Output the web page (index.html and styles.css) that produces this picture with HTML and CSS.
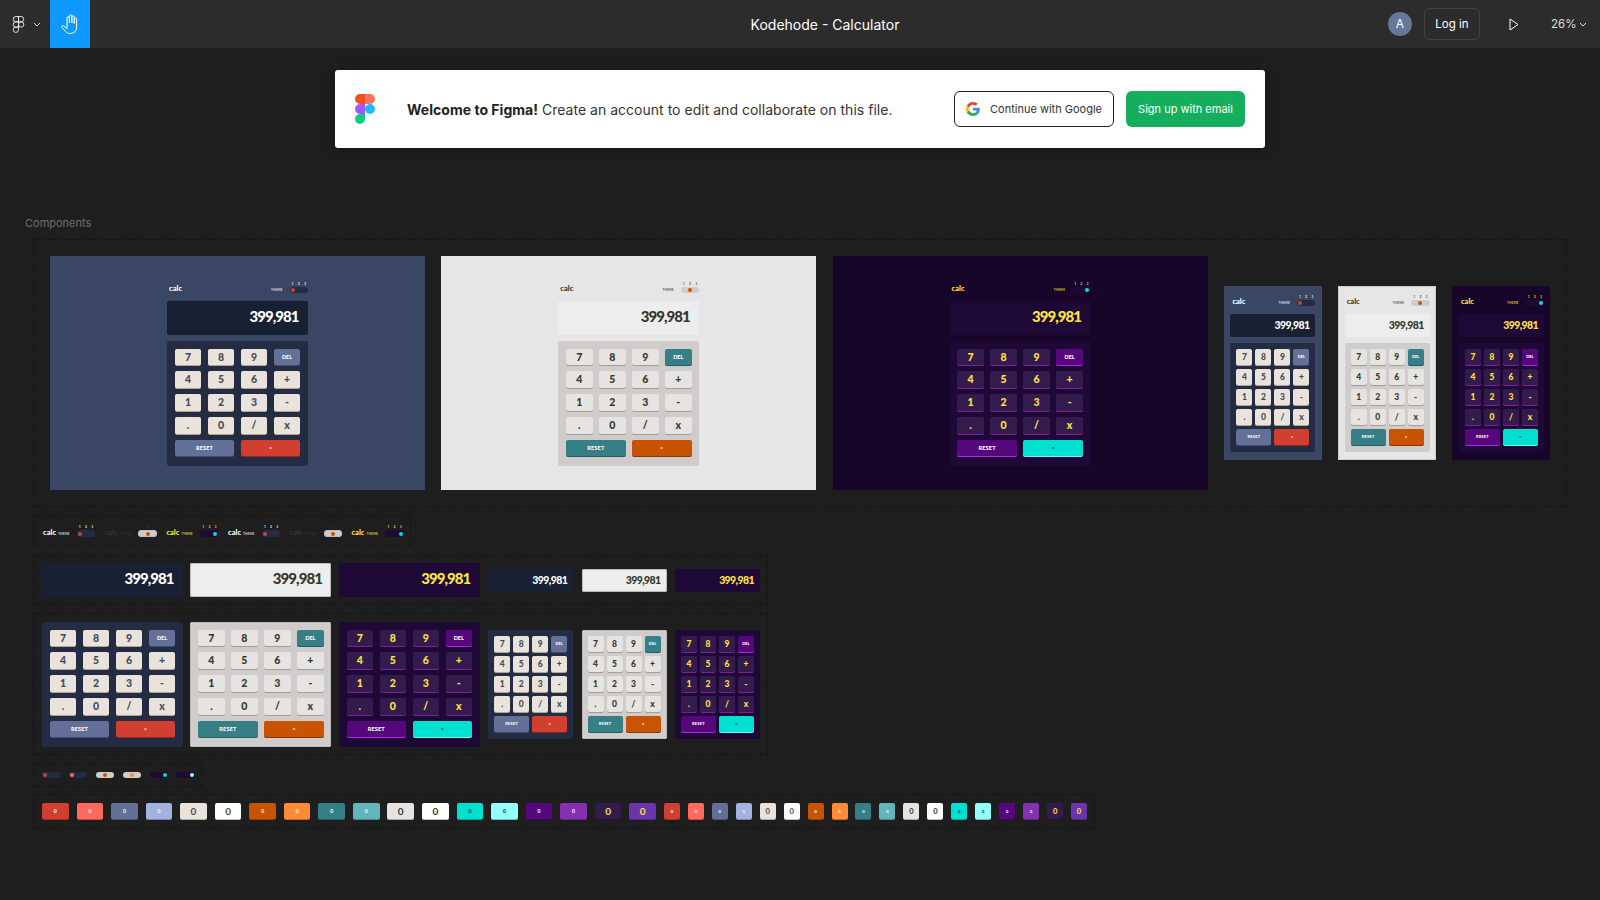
FILE: index.html
```html
<!DOCTYPE html>
<html lang="en">
<head>
  <meta charset="UTF-8">
  <meta name="viewport" content="width=device-width, initial-scale=1.0">
  <title>Kodehode - Calculator</title>
  <link rel="stylesheet" href="styles.css">
</head>
<body>
  <header class="topbar">
    <div class="menu">
      <svg class="figma-outline" viewBox="-2 -2 42 61">
        <path d="M19 28.5a9.5 9.5 0 1 1 19 0a9.5 9.5 0 1 1-19 0z"/>
        <path d="M0 47.5A9.5 9.5 0 0 1 9.5 38H19v9.5a9.5 9.5 0 1 1-19 0z"/>
        <path d="M19 0v19h9.5a9.5 9.5 0 1 0 0-19H19z"/>
        <path d="M0 9.5A9.5 9.5 0 0 0 9.5 19H19V0H9.5A9.5 9.5 0 0 0 0 9.5z"/>
        <path d="M0 28.5A9.5 9.5 0 0 0 9.5 38H19V19H9.5A9.5 9.5 0 0 0 0 28.5z"/>
      </svg>
      <svg class="chevron" viewBox="0 0 8 5"><path d="M1 1l3 3 3-3"/></svg>
    </div>
    <div class="hand">
      <svg viewBox="0 0 18 20">
        <path d="M6 11V4a1.2 1.2 0 0 1 2.4 0v5M8.4 9V2a1.2 1.2 0 0 1 2.4 0v7M10.8 9V3a1.2 1.2 0 0 1 2.4 0v6.5M13.200 9.500V5a1.2 1.2 0 0 1 2.400 0v8.500a6 6 0 0 1-6 6H9c-2 0-3.200-.8-4.400-2L1 13.500c-.8-1 .5-2.300 1.600-1.600L6 14.500V11"/>
      </svg>
    </div>
    <div class="title">Kodehode - Calculator</div>
    <div class="actions">
      <div class="avatar">A</div>
      <button class="login">Log in</button>
      <svg class="play" viewBox="0 0 10 13"><path d="M1 1l8 5.500-8 5.500z"/></svg>
      <div class="zoom-level">26%</div>
      <svg class="chevron" viewBox="0 0 8 5"><path d="M1 1l3 3 3-3"/></svg>
    </div>
  </header>

  <main class="canvas">
    <div class="banner">
      <svg class="figma-logo" viewBox="0 0 38 57">
        <path fill="#1abcfe" d="M19 28.5a9.5 9.5 0 1 1 19 0a9.5 9.5 0 1 1-19 0z"/>
        <path fill="#0acf83" d="M0 47.5A9.5 9.5 0 0 1 9.5 38H19v9.5a9.5 9.5 0 1 1-19 0z"/>
        <path fill="#ff7262" d="M19 0v19h9.5a9.5 9.5 0 1 0 0-19H19z"/>
        <path fill="#f24e1e" d="M0 9.5A9.5 9.5 0 0 0 9.5 19H19V0H9.5A9.5 9.5 0 0 0 0 9.5z"/>
        <path fill="#a259ff" d="M0 28.5A9.5 9.5 0 0 0 9.5 38H19V19H9.5A9.5 9.5 0 0 0 0 28.5z"/>
      </svg>
      <p class="welcome"><strong>Welcome to Figma!</strong> Create an account to edit and collaborate on this file.</p>
      <button class="btn-google">
        <svg viewBox="0 0 48 48">
          <path fill="#ea4335" d="M24 9.500c3.540 0 6.710 1.220 9.210 3.600l6.850-6.850C35.900 2.380 30.470 0 24 0 14.620 0 6.510 5.380 2.560 13.220l7.980 6.190C12.430 13.720 17.740 9.500 24 9.500z"/>
          <path fill="#4285f4" d="M46.980 24.550c0-1.570-.15-3.090-.38-4.550H24v9.020h12.940c-.58 2.960-2.260 5.480-4.780 7.180l7.730 6c4.510-4.180 7.090-10.360 7.090-17.650z"/>
          <path fill="#fbbc05" d="M10.530 28.590c-.48-1.450-.76-2.990-.76-4.590s.27-3.140.76-4.590l-7.980-6.190C.92 16.460 0 20.120 0 24c0 3.880.92 7.540 2.560 10.780l7.970-6.190z"/>
          <path fill="#34a853" d="M24 48c6.480 0 11.930-2.130 15.890-5.810l-7.730-6c-2.150 1.450-4.920 2.300-8.160 2.300-6.260 0-11.570-4.220-13.470-9.910l-7.980 6.190C6.510 42.620 14.620 48 24 48z"/>
        </svg>
        Continue with Google
      </button>
      <button class="btn-signup">Sign up with email</button>
    </div>

    <div class="page-label">Components</div>
    <section class="group group-main" id="mainGroup"></section>
    <section class="group group-headers" id="headerGroup"></section>
    <section class="group group-screens" id="screenGroup"></section>
    <section class="group group-keypads" id="keypadGroup"></section>
    <section class="group group-toggles" id="toggleGroup"></section>
    <section class="group group-swatches" id="swatchGroup"></section>
  </main>

  <script src="script.js"></script>
</body>
</html>
```

FILE: styles.css
```css
/* page */
* {
  box-sizing: border-box;
}
body {
  margin: 0;
  height: 900px;
  overflow: hidden;
  background-color: #1e1e1e;
  font-family: Inter, "Liberation Sans", sans-serif;
}

/* top bar */
.topbar {
  display: flex;
  align-items: center;
  height: 48px;
  background-color: #2c2c2c;
  color: #fff;
}
.menu {
  display: flex;
  align-items: center;
  gap: 8px;
  width: 50px;
  padding-left: 12px;
}
.figma-outline {
  width: 13px;
  height: 17px;
  fill: none;
  stroke: #fff;
  stroke-width: 3;
}
.chevron {
  width: 8px;
  height: 5px;
  fill: none;
  stroke: #ddd;
  stroke-width: 1;
}
.hand {
  display: flex;
  align-items: center;
  justify-content: center;
  width: 40px;
  height: 48px;
  background-color: #0d99ff;
}
.hand svg {
  width: 18px;
  height: 20px;
  fill: none;
  stroke: #fff;
  stroke-width: 1;
  overflow: visible;
}
.title {
  flex: 1;
  margin-right: -172px;
  text-align: center;
  font-size: 14px;
}
.actions {
  display: flex;
  align-items: center;
  width: 212px;
  font-size: 11.5px;
}
.avatar {
  width: 24px;
  height: 24px;
  margin-right: 12px;
  border-radius: 50%;
  background-color: #667799;
  text-align: center;
  font-size: 12px;
  line-height: 24px;
}
.login {
  width: 56px;
  height: 32px;
  margin-right: 29px;
  border: 1px solid #444;
  border-radius: 6px;
  background: none;
  color: #fff;
  font: 400 11.5px Inter, sans-serif;
}
.play {
  width: 10px;
  height: 13px;
  margin-right: 32px;
  fill: none;
  stroke: #fff;
  stroke-width: 1;
}
.zoom-level {
  width: 28px;
  color: #ddd;
}

/* canvas */
.canvas {
  position: relative;
  height: 852px;
  padding-top: 22px;
}
.banner {
  display: flex;
  align-items: center;
  width: 930px;
  height: 78px;
  margin-left: 335px;
  padding: 0 20px;
  border-radius: 3px;
  background-color: #fff;
  box-shadow: 0 2px 14px rgba(0, 0, 0, 0.2);
}
.figma-logo {
  width: 20px;
  height: 30px;
  margin-right: 32px;
}
.welcome {
  flex: 1;
  margin: 0;
  color: #333;
  font-size: 14px;
  letter-spacing: 0.02px;
}
.welcome strong {
  color: #222;
}
.btn-google,
.btn-signup {
  height: 36px;
  border-radius: 6px;
  font: 400 11px Inter, sans-serif;
}
.btn-google {
  display: flex;
  align-items: center;
  gap: 10px;
  width: 160px;
  margin-right: 12px;
  padding: 0 0 0 11px;
  border: 1px solid #222;
  background-color: #fff;
  color: #333;
}
.btn-google svg {
  width: 14px;
  height: 14px;
}
.btn-signup {
  width: 119px;
  border: none;
  background-color: #14ae5c;
  color: #fff;
}
.page-label {
  position: absolute;
  left: 25px;
  top: 168px;
  color: #6e6e6e;
  font-size: 11px;
}

/* dashed component groups, placed freely on the canvas */
.group {
  position: absolute;
  left: 33px;
  display: flex;
  align-items: center;
  border: 1px dashed #141414;
}
.group-main {
  top: 191px;
  width: 1534px;
  height: 268px;
  padding-left: 16px;
  gap: 16.300px;
}
.group-headers {
  top: 467px;
  width: 378px;
  height: 31px;
  padding-left: 9px;
  gap: 9.4px;
}
.group-screens {
  top: 507px;
  width: 735px;
  height: 50px;
  padding-left: 8px;
  gap: 7.4px;
}
.group-keypads {
  top: 565px;
  width: 735px;
  height: 142px;
  padding-left: 8px;
  gap: 7.4px;
}
.group-toggles {
  top: 715px;
  width: 169px;
  height: 24px;
  padding-left: 8px;
  gap: 8.4px;
}
.group-swatches {
  top: 746px;
  width: 1062px;
  height: 34px;
  padding-left: 8px;
  gap: 7.960px;
}

/* themes */
.t1 {
  --bg: #3a4764;
  --pad: #232c43;
  --screen: #182034;
  --ink: #fff;
  --dot: #d03f2f;
  --key: #eae3dc;
  --key-low: #b4a597;
  --key-ink: #444b5a;
  --fn: #637097;
  --fn-low: #404e72;
  --eq: #d03f2f;
  --eq-low: #93261a;
  --eq-ink: #fff;
}
.t2 {
  --bg: #e6e6e6;
  --pad: #d1cccc;
  --screen: #ededed;
  --ink: #36362c;
  --dot: #c85402;
  --key: #e5e4e0;
  --key-low: #a69d91;
  --key-ink: #36362c;
  --fn: #377f86;
  --fn-low: #1b5f65;
  --eq: #c85402;
  --eq-low: #873901;
  --eq-ink: #fff;
}
.t3 {
  --bg: #17062a;
  --pad: #1e0836;
  --screen: #1e0836;
  --ink: #ffe53d;
  --dot: #00e0d1;
  --key: #331b4d;
  --key-low: #851c9c;
  --key-ink: #ffe53d;
  --fn: #56077c;
  --fn-low: #b523ef;
  --eq: #00e0d1;
  --eq-low: #6cf9f2;
  --eq-ink: #1a2327;
}
.t1.hover {
  --dot: #ff6a5c;
}
.t2.hover {
  --dot: #ff8a38;
}
.t3.hover {
  --dot: #94fff9;
}

/* calculator frames */
.frame {
  display: flex;
  align-items: center;
  justify-content: center;
  width: 375px;
  height: 234px;
  background-color: var(--bg);
}
.calc {
  width: 141px;
}
.frame.small {
  width: 98px;
  height: 174px;
}
.frame.small .calc {
  width: 85px;
}
.frame.small.t2 {
  border: 1px solid #ccc;
}

/* calc header + toggle */
.calc-header {
  display: flex;
  align-items: flex-end;
  height: 12.5px;
  margin-bottom: 8px;
  padding-left: 2px;
  color: var(--ink);
}
.logo {
  font: 900 7.500px/9px Lato, sans-serif;
}
.theme-label {
  margin: 0 7px 1px auto;
  font: 700 3px/4px Lato, sans-serif;
  letter-spacing: 0.2px;
  opacity: 0.8;
}
.switch {
  width: 18.500px;
}
.switch-nums {
  display: flex;
  font: 700 2.700px/6px Lato, sans-serif;
  text-align: center;
}
.switch-nums span {
  flex: 1;
}
.toggle {
  display: flex;
  align-items: center;
  justify-content: flex-start;
  width: 18.500px;
  height: 6.500px;
  padding: 0 1.200px;
  border-radius: 4px;
  background-color: var(--pad);
}
.toggle.t2 {
  justify-content: center;
}
.toggle.t3 {
  justify-content: flex-end;
}
.toggle i {
  width: 4px;
  height: 4px;
  border-radius: 50%;
  background-color: var(--dot);
}
.calc-header.on-row {
  width: 52.300px;
  margin: 0;
  padding: 0;
}
.calc-header.on-row .theme-label {
  margin: 0 0 1px 2px;
}
.calc-header.on-row .switch {
  margin-left: auto;
}

/* screen */
.screen {
  flex: none;
  width: 141px;
  height: 33.500px;
  padding-right: 9.500px;
  border-radius: 2px;
  background-color: var(--screen);
  color: var(--ink);
  text-align: right;
  font: 900 15px/31.500px Lato, sans-serif;
  letter-spacing: -0.95px;
}
.screen.small {
  width: 85px;
  height: 23px;
  padding-right: 6px;
  font-size: 10.500px;
  line-height: 22px;
  letter-spacing: -0.6px;
}
.group > .screen.small,
.group > .pad.small {
  margin-left: 1px;
}
.group > .screen.t2,
.group > .pad.t2,
.calc-header.on-row .toggle.t2 {
  outline: 1px solid #bbb;
  outline-offset: -1px;
}

/* keypad */
.pad {
  flex: none;
  display: grid;
  grid-template-columns: repeat(4, 26.500px);
  grid-auto-rows: 16.700px;
  gap: 6.100px 6.500px;
  width: 141px;
  height: 125px;
  margin-top: 6px;
  padding: 8px 7.750px;
  border-radius: 2px;
  background-color: var(--pad);
}
.group > .pad {
  margin-top: 0;
}
.pad.small {
  grid-template-columns: repeat(4, 16px);
  grid-auto-rows: 16px;
  gap: 4px 3px;
  width: 85px;
  height: 109px;
  padding: 6px;
}
.key {
  border-radius: 2px;
  background-color: var(--key);
  box-shadow: 0 1px 0 var(--key-low);
  color: var(--key-ink);
  text-align: center;
  font: 900 10.500px/16.700px Lato, sans-serif;
}
.small .key {
  font-size: 8.500px;
  line-height: 16px;
}
.key-del,
.key-reset {
  background-color: var(--fn);
  box-shadow: 0 1px 0 var(--fn-low);
  color: #fff;
  font-size: 5.500px;
}
.key-reset {
  grid-column: span 2;
  letter-spacing: 0.2px;
}
.key-eq {
  grid-column: span 2;
  background-color: var(--eq);
  box-shadow: 0 1px 0 var(--eq-low);
  color: var(--eq-ink);
  font-size: 5px;
}
.small .key-del,
.small .key-reset,
.small .key-eq {
  font-size: 4px;
}

/* color swatches */
.swatch {
  flex: none;
  width: 26.600px;
  height: 17px;
  border-radius: 2px;
  box-shadow: inset 0 -1px 0 rgba(0, 0, 0, 0.25);
  text-align: center;
  font: 700 5px/17px Lato, sans-serif;
}
.swatch.big-text {
  font-size: 10px;
}
.swatch.small {
  width: 16px;
  font-size: 4px;
}
.swatch.small.big-text {
  font-size: 7.500px;
}
```

FILE: script.js
```js
const themes = ["t1", "t2", "t3"];
const keys = ["7", "8", "9", "DEL", "4", "5", "6", "+", "1", "2", "3", "-", ".", "0", "/", "x", "RESET", "="];

// bg, text, big digit
const swatches = [
  ["#d03f2f", "#fff", false],
  ["#ff6a5c", "#fff", false],
  ["#637097", "#fff", false],
  ["#a2b3e1", "#fff", false],
  ["#eae3dc", "#444b5a", true],
  ["#ffffff", "#444b5a", true],
  ["#c85402", "#fff", false],
  ["#ff8a38", "#fff", false],
  ["#377f86", "#fff", false],
  ["#62b5bc", "#fff", false],
  ["#e5e4e0", "#36362c", true],
  ["#ffffff", "#36362c", true],
  ["#00e0d1", "#1a2327", false],
  ["#94fff9", "#1a2327", false],
  ["#56077c", "#fff", false],
  ["#8631af", "#fff", false],
  ["#331b4d", "#ffe53d", true],
  ["#6c34ac", "#ffe53d", true],
];

function keypad(theme, small) {
  const buttons = keys.map((key) => {
    let cls = "key";
    if (key === "DEL") cls += " key-del";
    if (key === "RESET") cls += " key-reset";
    if (key === "=") cls += " key-eq";
    return `<div class="${cls}">${key}</div>`;
  });
  return `<div class="pad ${theme} ${small ? "small" : ""}">${buttons.join("")}</div>`;
}

function screen(theme, small) {
  return `<div class="screen ${theme} ${small ? "small" : ""}">399,981</div>`;
}

function toggle(theme, hover) {
  return `<div class="toggle ${theme} ${hover ? "hover" : ""}"><i></i></div>`;
}

function header(theme, onRow) {
  return `
    <div class="calc-header ${theme} ${onRow ? "on-row" : ""}">
      <div class="logo">calc</div>
      <div class="theme-label">THEME</div>
      <div class="switch">
        <div class="switch-nums"><span>1</span><span>2</span><span>3</span></div>
        ${toggle(theme)}
      </div>
    </div>`;
}

function frame(theme, small) {
  return `
    <div class="frame ${theme} ${small ? "small" : ""}">
      <div class="calc">
        ${header(theme)}
        ${screen(theme, small)}
        ${keypad(theme, small)}
      </div>
    </div>`;
}

const both = [false, true];

document.getElementById("mainGroup").innerHTML = both
  .map((small) => themes.map((t) => frame(t, small)).join(""))
  .join("");

document.getElementById("headerGroup").innerHTML = [...themes, ...themes]
  .map((t) => header(t, true))
  .join("");

document.getElementById("screenGroup").innerHTML = both
  .map((small) => themes.map((t) => screen(t, small)).join(""))
  .join("");

document.getElementById("keypadGroup").innerHTML = both
  .map((small) => themes.map((t) => keypad(t, small)).join(""))
  .join("");

document.getElementById("toggleGroup").innerHTML = themes
  .map((t) => toggle(t) + toggle(t, true))
  .join("");

document.getElementById("swatchGroup").innerHTML = both
  .map((small) =>
    swatches
      .map(([bg, ink, big]) => {
        const cls = `swatch ${small ? "small" : ""} ${big ? "big-text" : ""}`;
        return `<div class="${cls}" style="background-color:${bg};color:${ink}">0</div>`;
      })
      .join("")
  )
  .join("");
```
